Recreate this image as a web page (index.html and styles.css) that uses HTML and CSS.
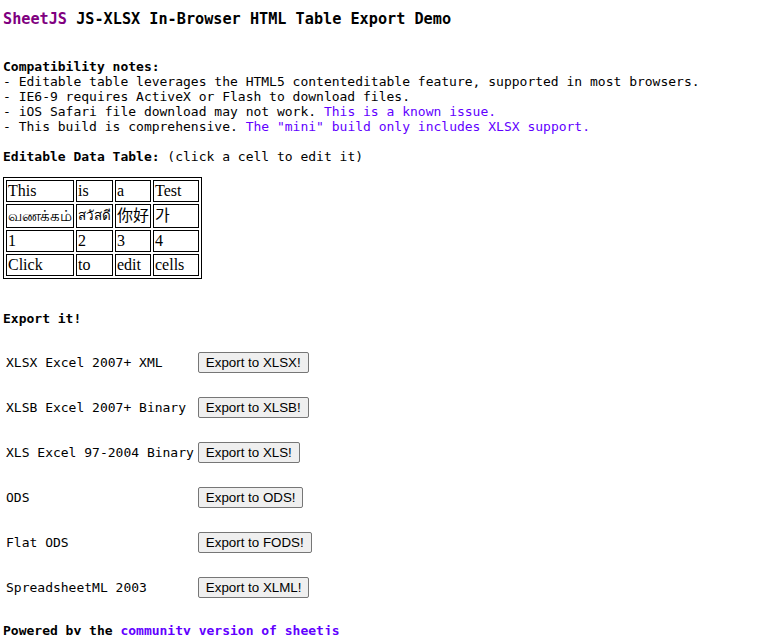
FILE: index.html
```html
<!DOCTYPE html>
<html>
<head>
<meta charset="utf-8">
<title>SheetJS Live Demo</title>
<link rel="stylesheet" href="styles.css">
</head>
<body>
<div class="title"><a class="brand" href="#">SheetJS</a> JS-XLSX In-Browser HTML Table Export Demo</div>
<pre class="notes"><b>Compatibility notes:</b>
- Editable table leverages the HTML5 contenteditable feature, supported in most browsers.
- IE6-9 requires ActiveX or Flash to download files.
- iOS Safari file download may not work. <a class="link" href="#">This is a known issue.</a>
- This build is comprehensive. <a class="link" href="#">The "mini" build only includes XLSX support.</a>

<b>Editable Data Table:</b> (click a cell to edit it)</pre>
<table class="data">
<colgroup><col class="c1"><col class="c2"><col class="c3"><col class="c4"></colgroup>
<tr><td>This</td><td>is</td><td>a</td><td>Test</td></tr>
<tr class="tall"><td class="tamil">வணக்கம்</td><td class="thai">สวัสดี</td><td>你好</td><td>가</td></tr>
<tr><td>1</td><td>2</td><td>3</td><td>4</td></tr>
<tr><td>Click</td><td>to</td><td>edit</td><td>cells</td></tr>
</table>
<pre class="export-head"><b>Export it!</b></pre>
<table class="opts">
<tr><td class="lbl">XLSX Excel 2007+ XML</td><td class="btn-cell"><button class="xport">Export to XLSX!</button></td></tr>
<tr><td class="lbl">XLSB Excel 2007+ Binary</td><td class="btn-cell"><button class="xport">Export to XLSB!</button></td></tr>
<tr><td class="lbl">XLS Excel 97-2004 Binary</td><td class="btn-cell"><button class="xport">Export to XLS!</button></td></tr>
<tr><td class="lbl">ODS</td><td class="btn-cell"><button class="xport">Export to ODS!</button></td></tr>
<tr><td class="lbl">Flat ODS</td><td class="btn-cell"><button class="xport">Export to FODS!</button></td></tr>
<tr><td class="lbl">SpreadsheetML 2003</td><td class="btn-cell"><button class="xport">Export to XLML!</button></td></tr>
</table>
<pre class="footer"><b>Powered by the <a class="link" href="#">community version of sheetjs</a></b></pre>
</body>
</html>
```
FILE: styles.css
```css
html, body {
  margin: 0;
  padding: 0;
  background: #fff;
}
body {
  padding: 0 3px;
  color: #000;
  font-family: "DejaVu Sans Mono", monospace;
  font-size: 13px;
}
a {
  text-decoration: none;
}
.title {
  margin-top: 10px;
  font-size: 15.2px;
  line-height: 18px;
  font-weight: bold;
  white-space: pre;
}
.brand {
  color: #800080;
}
.link {
  color: #6200ff;
}
.notes {
  margin: 31px 0 0;
  font-family: "DejaVu Sans Mono", monospace;
  font-size: 13px;
  line-height: 15px;
}
.data {
  margin-top: 13px;
  border: 1px solid #000;
  border-spacing: 2px;
  table-layout: fixed;
  width: 198px;
  font-family: "Liberation Serif", "Noto Sans CJK SC", serif;
  font-size: 16px;
  line-height: 18px;
}
.c1 { width: 68px; }
.c2 { width: 37px; }
.c3 { width: 36px; }
.c4 { width: 46px; }
.data td {
  border: 1px solid #000;
  padding: 1px;
  height: 18px;
  white-space: nowrap;
  vertical-align: middle;
}
.data .tall td {
  height: 20px;
}
.data .tamil {
  font-size: 14.5px;
  letter-spacing: -0.3px;
}
.data .thai {
  font-size: 13.5px;
}
.export-head {
  margin: 32px 0 0;
  font-family: "DejaVu Sans Mono", monospace;
  font-size: 13px;
  line-height: 15px;
}
.opts {
  margin-top: 13px;
  border-spacing: 2px;
}
.opts td {
  padding: 1px;
  height: 41px;
  vertical-align: middle;
}
.lbl {
  font-family: "DejaVu Sans Mono", monospace;
  font-size: 13px;
  line-height: 15px;
  white-space: pre;
}
.xport {
  font-family: "Liberation Sans", Arial, sans-serif;
  font-size: 13.333px;
  padding: 1px 7px;
  height: 21px;
  line-height: 15px;
  background: #efefef;
  border: 1px solid #767676;
  border-radius: 2px;
  color: #000;
}
.footer {
  margin: 12px 0 0;
  font-family: "DejaVu Sans Mono", monospace;
  font-size: 13px;
  line-height: 15px;
}
```
